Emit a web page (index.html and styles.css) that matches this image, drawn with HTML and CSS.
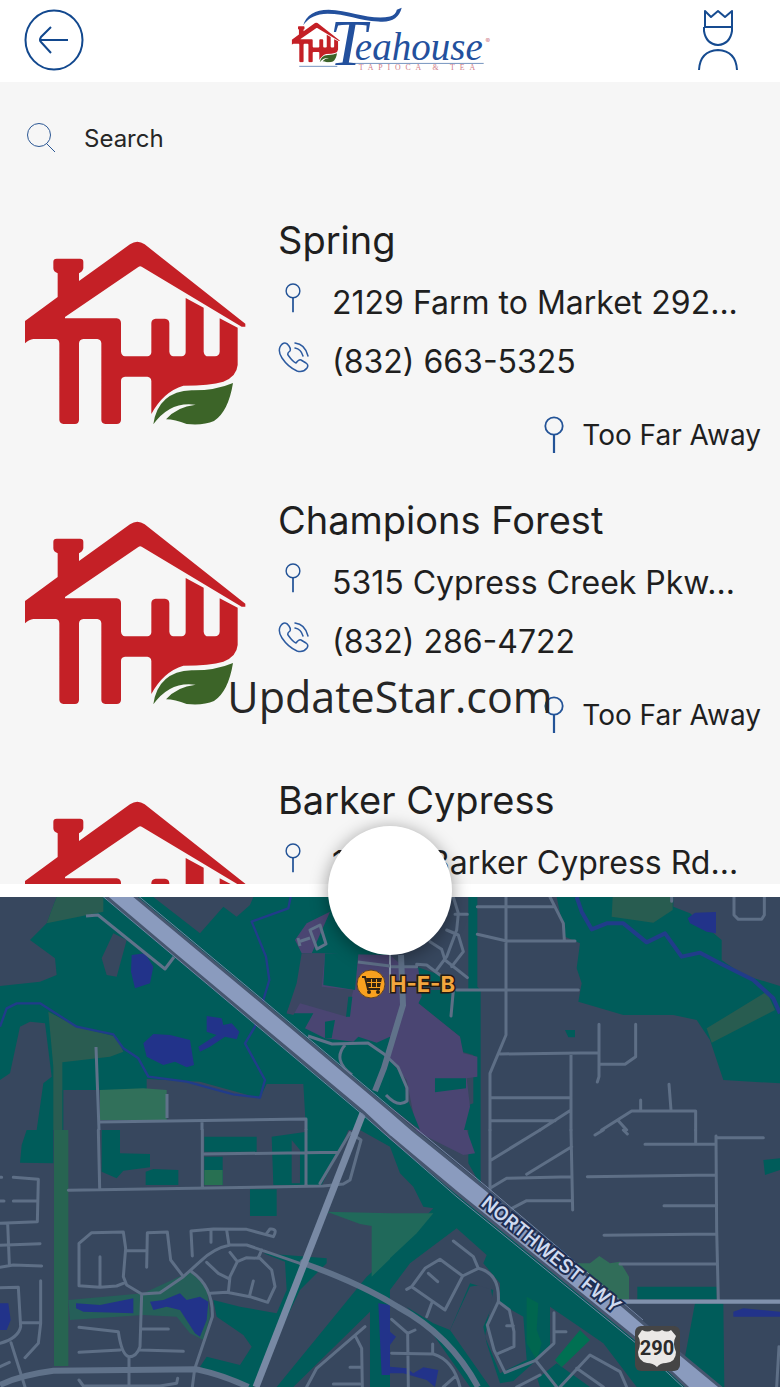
FILE: index.html
```html
<!DOCTYPE html>
<html lang="en">
<head>
<meta charset="utf-8">
<meta name="viewport" content="width=device-width, initial-scale=1">
<title>Teahouse locations</title>
<link rel="stylesheet" href="styles.css">
</head>
<body>
<svg class="defs" aria-hidden="true">
  <symbol id="house" viewBox="45 48 663 552">
    <path fill="#c42026" d="M45 288 143 216V145Q130 140 130 130V110Q130 101 140 101H210Q220 101 220 110V130Q218 140 207 145V168L360 58Q382 43 404 58L706 296V305H695L395 125Q390 122 385 126L165 276V280H320Q333 282 333 294V380Q335 393 345 394H412Q423 393 424 382V294Q425 282 437 281H465Q477 282 478 294V380Q480 393 490 394H515Q526 393 527 382V219L581 248V380Q583 394 595 394H615Q628 393 629 380V280L683 308V420Q680 455 640 470Q600 482 520 482Q460 500 424 567V468Q423 456 412 455H345Q333 456 333 468V585Q332 597 320 597H286Q274 596 274 585V355Q273 343 262 342H220Q208 343 207 355V585Q206 597 195 597H160Q149 596 148 585V355Q147 343 138 342H70Q58 343 45 355Z"/>
    <path fill="#3c6428" d="M430 598Q444 500 545 496Q615 497 669 474Q655 560 612 588Q580 602 530 597Q495 583 468 583Q500 545 557 539Q480 528 430 598Z"/>
  </symbol>
  <symbol id="pin" viewBox="0 0 20 38">
    <circle cx="10" cy="10" r="8.7" fill="none" stroke="#235397" stroke-width="1.8"/>
    <path d="M10 19V37" stroke="#235397" stroke-width="2.2"/>
  </symbol>
  <symbol id="phone" viewBox="0 0 32 32">
    <g fill="none" stroke="#2d5ba0" stroke-width="1.5" stroke-linecap="round" stroke-linejoin="round">
      <path d="M7 2Q4 2 2 6Q0 11 4 17Q10 26 19 30Q25 32 29 27Q31 24 28 22L23 19Q21 18 18 22Q15 21 10 14Q9 12 12 10Q13 8 11 5Q9 2 7 2Z"/>
      <path d="M17 2Q27 3 30 15M17 7Q23 8 25 15"/>
    </g>
  </symbol>
</svg>

<header class="topbar">
  <button class="icon-button" type="button" aria-label="Back">
    <svg class="icon-back" viewBox="0 0 60 62" fill="none" stroke="#12488e" stroke-width="2">
      <ellipse cx="30" cy="31" rx="28.500" ry="29.500"/>
      <path d="M44 31H16M27 18 17 28Q15 31 17 33L27 44"/>
    </svg>
  </button>
  <svg class="brand" viewBox="280 0 220 82" role="img" aria-label="Teahouse Tapioca &amp; Tea">
    <use href="#house" x="289" y="23" width="50" height="41"/>
    <path d="M297 68H336M340 65H486" stroke="#7191bd" stroke-width="1"/>
    <path fill="#23509d" d="M301 26Q306 10 327 10C350 11 370 21 390 17Q396 15 397 10L402 8Q398 24 378 22C358 21 345 14 326 14Q309 14 301 26Z"/>
    <text class="brand-cap" x="328" y="67">T<tspan class="brand-name" x="354" y="62">eahouse</tspan></text>
    <text class="brand-tag" x="358" y="72">TAPIOCA &amp; TEA</text>
    <text class="brand-mark" x="488" y="44">®</text>
  </svg>
  <button class="icon-button" type="button" aria-label="Account">
    <svg class="icon-user" viewBox="0 0 40 62" fill="none" stroke="#164b90" stroke-width="2" stroke-linejoin="round">
      <path d="M7 18V2L13 8 20 2 27 8 34 2V18H7ZM6 18V22Q8 35 20 36Q32 35 34 22V18M1 61Q2 42 20 41Q38 42 39 61"/>
    </svg>
  </button>
</header>

<main class="content">
  <section class="locations">
    <label class="search">
      <svg class="icon-search" viewBox="0 0 30 30" fill="none" stroke="#2b5794">
        <circle cx="12" cy="12" r="11.500"/><path d="M20 21 28 29"/>
      </svg>
      <input class="search-input" type="search" placeholder="Search" aria-label="Search">
    </label>
    <ul class="list">
      <li class="card">
        <svg class="card-logo" aria-hidden="true"><use href="#house"/></svg>
        <div class="card-body">
          <h2 class="name">Spring</h2>
          <p class="line"><svg class="icon-pin"><use href="#pin"/></svg>2129 Farm to Market 292...</p>
          <p class="line"><svg class="icon-phone"><use href="#phone"/></svg>(832) 663-5325</p>
          <p class="distance"><svg class="icon-pin-lg"><use href="#pin"/></svg>Too Far Away</p>
        </div>
      </li>
      <li class="card">
        <svg class="card-logo" aria-hidden="true"><use href="#house"/></svg>
        <div class="card-body">
          <h2 class="name">Champions Forest</h2>
          <p class="line"><svg class="icon-pin"><use href="#pin"/></svg>5315 Cypress Creek Pkw...</p>
          <p class="line"><svg class="icon-phone"><use href="#phone"/></svg>(832) 286-4722</p>
          <p class="distance"><svg class="icon-pin-lg"><use href="#pin"/></svg>Too Far Away</p>
        </div>
      </li>
      <li class="card">
        <svg class="card-logo" aria-hidden="true"><use href="#house"/></svg>
        <div class="card-body">
          <h2 class="name">Barker Cypress</h2>
          <p class="line"><svg class="icon-pin"><use href="#pin"/></svg>17376 Barker Cypress Rd...</p>
        </div>
      </li>
    </ul>
  </section>

  <section class="map-panel">
    <svg class="map" viewBox="0 897 780 490" preserveAspectRatio="xMidYMid slice" role="img" aria-label="Map near Northwest Freeway">
      <rect y="897" width="780" height="490" fill="#37475e"/>

      <!-- Land, north west -->
      <g transform="translate(0 880) scale(.33333)">
        <path fill="#005c5a" d="M0 51H1170V750H0Z"/>
        <path fill="#37475e" d="M0 51H170L140 130 90 180 165 235 170 285 120 305 0 318ZM60 440 90 425 135 430 155 590 130 610 110 750H0V600L30 580ZM460 51H760L750 75 710 110 670 80 600 160ZM340 160 380 180 350 290 320 285 305 235ZM440 597 600 605 780 655 800 612H910L918 750H190V630H440Z"/>
        <path fill="#2a5c51" d="M170 51H310V95L140 130ZM145 395 230 440 350 470 370 515 330 530 187 547V750H160V560Z"/>
        <path fill="#31705a" d="M300 630 430 625 500 630V720H300Z"/>
        <path fill="#4a4572" d="M990 95 920 130 885 180 905 220 1170 225V470L1130 488 1075 470 1060 485 975 475 915 445 940 400 860 400 900 300Z"/>
        <path fill="#3c4662" d="M905 220H975L965 320 1060 330 1040 410 900 370 880 405 860 400 890 310Z"/>
        <path fill="#005c5a" d="M975 222H1075L1065 330 970 315ZM975 425 1005 420 995 475H975ZM1045 350H1057L1050 410H1038Z"/>
        <path fill="#22338a" d="M395 225 435 220 460 260 450 310 405 325 393 275ZM430 490 460 462 510 465 570 480 582 555 560 562 525 545 490 555 440 530ZM620 408 665 415 670 435 695 430 718 455 710 478 675 470 630 500 600 515 595 500 650 465 620 455Z"/>
        <g class="stream">
          <path d="M0 440 20 385 50 370H120L230 440 340 463 370 505 415 535 445 590 560 605 700 643 780 653 795 600 735 490 765 440 790 360 808 300 798 230 755 125 865 85 872 51"/>
        </g>
      </g>

      <!-- Land, north east -->
      <g transform="translate(390 880) scale(.33333)">
        <path fill="#005c5a" d="M235 51H262V320L272 330V750H222V680L250 670V525L215 515 210 470 85 370 95 330H235ZM80 260 150 285V320H80ZM500 51H850V80L900 100 995 180V240L1060 285 1170 318V610L1000 600 960 480 920 420 850 405 700 405 565 365 575 310 560 265 570 190 525 170ZM525 450H555V472H535Z"/>
        <path fill="#4a4572" d="M0 225 40 260 85 265 95 350 85 370 210 470 220 520 262 530V590L230 595 240 680 222 750H80L50 600 0 540Z"/>
        <path fill="#005c5a" d="M135 595H228V625L135 637ZM0 540 40 590 50 650 90 750 0 680Z"/>
        <path fill="#285c50" d="M668 51H848V90L790 128 665 110ZM950 445 1130 335 1155 390 965 488Z"/>
        <path fill="#22338a" d="M893 115 915 98 978 96V160L950 155 900 130Z"/>
        <g class="stream wide">
          <path d="M560 51 575 95 605 148 650 130H700L770 187 825 160 875 230 930 218 1000 255 1090 300 1150 355 1170 400"/>
        </g>
        <g class="road">
          <path d="M348 51V465L325 520 300 580V750M262 80H490M480 51 520 130 523 180M262 163 350 183H555M200 330H565M330 522 627 518M627 433V590L622 606M737 433V530L705 553H632M543 522V750M302 653H543M302 722H495M450 750 543 690M635 750 725 693H917V750M837 613 843 690M752 660V690M685 722 710 750M1032 51V105L1045 118H1115L1123 105V51M845 51V64"/>
          <path d="M190 51 205 100 200 150 170 230 140 270M195 103H232M170 150 205 165 220 215 185 260M120 185 155 208 165 240 232 293M80 253 110 255 150 285M190 330 183 408M0 260H80"/>
        </g>
      </g>

      <!-- Land, south west -->
      <g transform="translate(0 1130) scale(.33333)">
        <path fill="#005c5a" d="M80 0H160V100L60 98 65 45ZM305 0H360V70L450 72V112L370 122 350 145 305 125ZM437 125 460 117 535 120V165H437ZM613 20H770V65H613ZM613 80H668V165H613ZM815 20 920 5V0H1045L1020 60 965 165H820ZM750 178H830V258H750ZM640 510 720 530 830 550 860 480 855 395 790 370 980 385V400L900 480 760 771H740L600 710 620 680 720 705 755 650 730 615 650 560ZM1170 380 1100 440 830 771H880L1110 545V771H1170ZM1080 0H1170V50Z"/>
        <path fill="#37475e" d="M875 30 900 60V160H875Z"/>
        <path fill="#276451" d="M162 0H205V708H162Z"/>
        <path fill="#255f59" d="M205 510 430 490 570 425 620 470 630 560 610 630 570 610 530 560 430 555 210 570Z"/>
        <path fill="#287052" d="M613 120H668V165H613Z"/>
        <path fill="#20695a" d="M980 245 1172 250V385L1115 440V288L1080 282Z"/>
        <path fill="#22338a" d="M228 520 300 525 400 505V550L250 545 228 535ZM450 515 490 510 540 490 560 510 600 500 625 515 620 570 600 620 585 610 540 540 500 530 460 540ZM0 520 25 520 32 570 20 600H0ZM1135 520 1170 525V735H1145Z"/>
        <g class="road">
          <path d="M295 0 299 175M607 0V170M918 0V165M205 181 970 168 1030 162 1050 150 1083 30 1050 8 960 160M613 72 1015 67M0 142H5M40 142 115 148 112 275 0 280M0 213H12M40 213H112M23 280 28 402M0 346 120 341M0 412 40 405 125 408M0 473 55 472 62 590Q55 625 0 640M62 578H122M122 452 122 580 115 640 75 683M33 638 75 771M0 710 28 697"/>
          <path d="M237 467V340L275 308 370 306 377 355 370 440 380 465 425 492 480 488 550 440 600 395Q640 355 690 345L740 345 900 400M237 467 300 472 350 468 375 458M300 380V470M377 362H440M440 412 442 308 502 306 512 390 550 440M577 378 573 303 640 297 740 298 820 320Q835 295 810 297L800 310M633 300V337M680 300 687 345M575 425Q640 470 637 560L583 720M620 397 655 430 685 445M690 367 712 395M685 487 690 440 712 395 740 383 780 385 815 420 825 470 803 517 750 500 680 487 632 490M785 360 775 383M760 453 748 500M425 492 420 650Q410 680 387 680Q365 675 355 605L237 592M425 597H505M237 667 360 660M420 660 550 664M387 682V771M583 725 577 771M237 750 250 768H480L530 760 533 745M1095 590 950 715 920 771M1067 620 1085 655 1087 771M1050 712H1085M1000 762H1080"/>
        </g>
        <path class="road-main" d="M0 765Q60 735 160 722L590 718Q670 735 745 771"/>
      </g>

      <!-- Land, south east -->
      <g transform="translate(390 1130) scale(.33333)">
        <path fill="#005c5a" d="M0 20 740 620 890 771H450L440 740 330 760 290 640 280 590 310 520 300 460 240 470 180 600 250 700 300 771H240L120 600 0 480V370L130 235 100 230 70 170 30 130 0 50ZM235 0H272V165L235 100ZM742 470H980V508H742ZM915 520H1000L1003 771H980L885 680ZM1120 90 1170 85V120L1125 135Z"/>
        <path fill="#37475e" d="M200 295 290 375 280 400 330 460V520L400 560 410 690 330 730 285 620 310 480 240 460 180 600 130 580 0 500V480L60 400ZM480 530 640 640 740 771H600L500 700 410 771H350L440 690 480 650Z"/>
        <path fill="#4a4572" d="M70 0H230L255 70 220 75 160 45Z"/>
        <path fill="#20695a" d="M0 250H130L80 310 0 385Z"/>
        <path fill="#316d59" d="M560 400 600 400 628 378 660 400 690 395 717 440V508H680Z"/>
        <path fill="#007052" d="M570 600 600 630 515 712 495 690Z"/>
        <path fill="#00664f" d="M410 500 445 520 440 600 455 640 440 690 410 640Z"/>
        <path fill="#22338a" d="M1030 545 1060 535 1170 545V560L1030 560ZM0 605 18 620 0 645ZM0 710 50 715 70 730 100 712 145 720 135 771 110 750 40 730H0Z"/>
        <g class="road">
          <path d="M300 0V190M543 0 548 240M300 92 450 0M545 50 410 133M300 175 350 145 545 140M360 238 410 212H545M765 43H975M978 18 980 300 985 510M978 23H1120M917 0V43M615 15 640 0M700 0 712 12M592 140 975 135M822 227H975M642 316 978 312M690 402 978 402"/>
          <path d="M190 333 250 380 265 415M50 478 65 470 105 415 150 388 218 438 165 540 65 470M115 430 143 455M125 520 110 560M218 438 265 415Q330 430 325 515L292 585 312 660 345 728 435 692 492 640V548M325 515 358 540 372 605V650L325 670M350 587H370M495 605H528M5 568 53 610 55 771M53 610 75 600M5 670 130 672Q190 690 210 771M128 642V670M160 771 195 740M380 771 450 735M440 695 500 771M510 771 600 675 690 725 710 771M560 715 640 771"/>
          <path d="M1167 650 1160 771"/>
        </g>
        <path class="road-light" d="M670 515H1170"/>
      </g>

      <!-- Arterials and interchange -->
      <path class="road-main" d="M300 1262Q360 1283 398 1307Q450 1335 478 1387M401 955 403 1005 384 1068 375 1091"/>
      <path stroke="#8794ac" stroke-width="2" d="M390 950V993"/>
      <g class="road-ramp">
        <path d="M308 1036 332 1044 368 1043 384 1054 398 1067 407 1088 407 1101Q398 1108 386 1095M345 1045Q332 1060 352 1075M358 962 390 966M310 930 320 925 326 944 317 949ZM298 942 310 938M298 938 300 946M86 916 98 915 165 969 174 957"/>
        <path d="M96 1047 99 1130M167 1094V1118M99 1122 306 1119V1130M202 1122V1130"/>
      </g>
      <path stroke="#7889a4" stroke-width="7" fill="none" d="M363 1113 256 1387"/>
      <path fill="#8a9bbe" stroke="#47566f" stroke-width="3" d="M103 894 175 955 363 1112 390 1137 457 1193 637 1340 690 1390H724L643 1323 487 1190 413 1130 390 1110 263 1003 132 894Z"/>
      <path fill="none" stroke="#7384a3" stroke-width="1" d="M100 894 363 1115 457 1197 637 1344 686 1390M136 894 263 1000 390 1107 487 1187 643 1320"/>

      <!-- Labels -->
      <circle cx="371" cy="984" r="14" fill="#f9a11f" stroke="#5d4327"/>
      <path fill="#302313" d="M366 978H382L380 987H368Z"/>
      <path fill="none" stroke="#302313" stroke-width="2" d="M362 977H365L368 989H380"/>
      <path fill="none" stroke="#f9a11f" stroke-width="1" d="M367 982.500H381M371.500 979V987M376.500 979V987"/>
      <circle cx="369" cy="992" r="2" fill="#302313"/>
      <circle cx="378" cy="992" r="2" fill="#302313"/>
      <text class="poi" x="390" y="992">H-E-B</text>
      <text class="freeway" transform="translate(480 1205) rotate(39)">NORTHWEST FWY</text>
      <rect x="635" y="1326" width="45" height="45" rx="6" fill="#454545"/>
      <path fill="#eae8e6" d="M642 1330Q648 1333 652 1330Q657 1333 662 1330Q667 1333 671 1330L676 1336Q672 1343 676 1352Q676 1362 666 1363Q660 1363 657 1367Q653 1363 647 1363Q638 1361 638 1352Q642 1342 638 1336Z"/>
      <text class="shield" x="657" y="1355">290</text>
    </svg>
    <button class="handle" type="button" aria-label="Resize map"></button>
  </section>
  <p class="watermark">UpdateStar.com</p>
</main>
</body>
</html>
```
FILE: styles.css
```css
* { box-sizing: border-box; }

body {
  margin: 0;
  height: 100vh;
  display: flex;
  flex-direction: column;
  overflow: hidden;
  background: #fff;
  color: #1f1f1f;
  font-family: Inter, "Liberation Sans", sans-serif;
}

button {
  padding: 0;
  border: 0;
  background: none;
}

h2, p, ul { margin: 0; padding: 0; font-weight: 400; }

svg { display: block; flex: none; }

.defs { position: absolute; width: 0; height: 0; }

.topbar {
  flex: none;
  display: grid;
  grid-template-columns: 1fr auto 1fr;
  align-items: center;
  height: 82px;
  padding: 0 24px 2px;
}

.icon-button:last-child { justify-self: end; padding-right: 18px; }
.icon-button:first-child { justify-self: start; }
.icon-back { width: 60px; height: 62px; }
.icon-user { width: 40px; height: 62px; }
.brand { width: 220px; height: 80px; }

.brand-cap, .brand-name {
  fill: #23509d;
  font-family: "Liberation Serif", serif;
  font-style: italic;
}
.brand-cap { font-size: 68px; }
.brand-name { font-size: 40px; }
.brand-tag {
  fill: #d07c88;
  font-family: "Liberation Serif", serif;
  font-size: 8px;
  letter-spacing: 5px;
}
.brand-mark { fill: #d07c88; font-size: 7px; }

.content {
  position: relative;
  flex: 1;
  min-height: 0;
  display: grid;
  grid-template-rows: minmax(0, 802fr) minmax(0, 503fr);
}

.locations { overflow: hidden; background: #f6f6f6; }

.search {
  display: flex;
  align-items: center;
  gap: 27px;
  height: 112px;
  padding: 0 27px;
}
.icon-search { width: 30px; height: 30px; }
.search-input {
  flex: 1;
  min-width: 0;
  padding: 0;
  border: 0;
  outline: 0;
  background: none;
  color: inherit;
  font: inherit;
  font-size: 24px;
}
.search-input::placeholder { color: #262626; opacity: 1; }

.list { padding: 20px 19px 0 25px; list-style: none; }

.card {
  display: flex;
  gap: 32px;
  height: 280px;
}
.card-logo { width: 221px; height: 184px; margin-top: 27px; }
.card-body { flex: 1; min-width: 0; }

.name { font-size: 38px; line-height: 52px; margin-bottom: 7px; white-space: nowrap; }

.line {
  display: flex;
  align-items: center;
  height: 59px;
  font-size: 32px;
  white-space: nowrap;
}
.icon-pin { width: 30px; height: 30px; margin: 0 24px 10px 0; }
.icon-phone { width: 32px; height: 32px; margin: 0 22px 10px 0; }

.distance {
  display: flex;
  align-items: center;
  justify-content: flex-end;
  gap: 18px;
  height: 50px;
  margin-top: 19px;
  font-size: 28px;
}
.icon-pin-lg { width: 20px; height: 38px; }

.map-panel {
  position: relative;
  padding-top: 13px;
  min-height: 0;
}
.map { width: 100%; height: 100%; }

.handle {
  position: absolute;
  top: -58px;
  left: 50%;
  width: 124px;
  height: 129px;
  margin-left: -62px;
  border-radius: 50%;
  background: #fff;
  box-shadow: 0 3px 18px #0006;
}

.watermark {
  position: absolute;
  top: 585px;
  left: 0;
  right: 0;
  text-align: center;
  color: #262626;
  font: 43px/60px "Open Sans", "Noto Sans", sans-serif;
}

.stream { fill: none; stroke: #213c8a; stroke-width: 7; stroke-linejoin: round; }
.stream.wide { stroke-width: 12; }
.road { fill: none; stroke: #5e6f86; stroke-width: 9; stroke-linecap: round; stroke-linejoin: round; }
.road-main { fill: none; stroke: #60728a; stroke-width: 5; }
g > .road-main { stroke-width: 18; }
.map > .road-main { stroke-width: 6; }
.road-ramp { fill: none; stroke: #60728a; stroke-width: 3; stroke-linejoin: round; }
.road-light { fill: none; stroke: #8091ac; stroke-width: 13; }

.poi {
  fill: #f2a63e;
  stroke: #241a10;
  stroke-width: 3px;
  paint-order: stroke;
  font-size: 22px;
  font-weight: 700;
}
.freeway {
  fill: #d0daf0;
  stroke: #1e2e52;
  stroke-width: 4px;
  paint-order: stroke;
  font-size: 19px;
  font-weight: 600;
}
.shield {
  fill: #2b2b2b;
  font: 700 20px Roboto, "Liberation Sans", sans-serif;
  text-anchor: middle;
}
```
